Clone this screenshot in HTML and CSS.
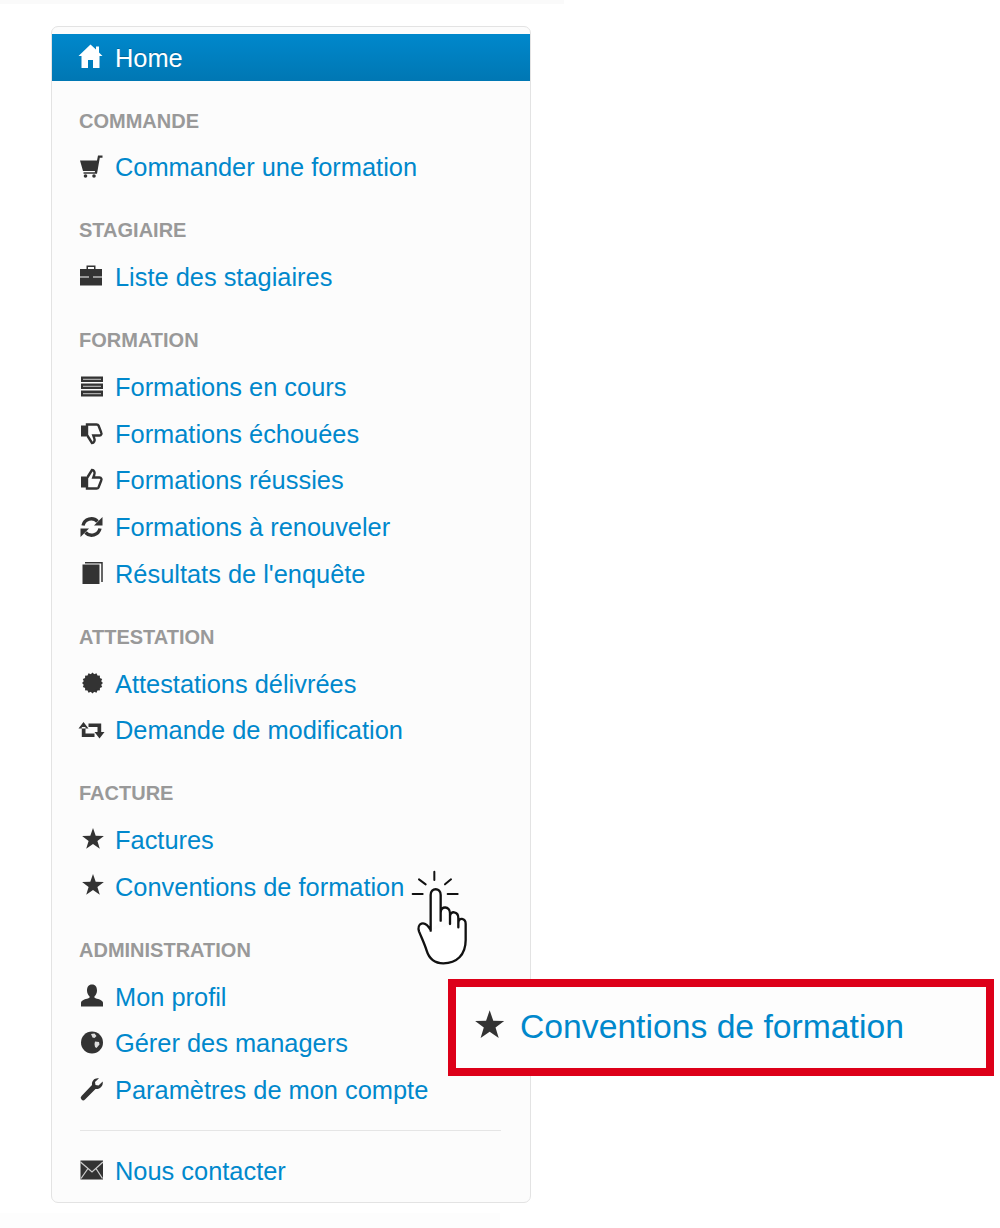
FILE: index.html
```html
<!DOCTYPE html>
<html lang="fr">
<head>
    <meta charset="UTF-8">
    <meta name="viewport" content="width=device-width, initial-scale=1.0">
    <title>Conventions de formation</title>
    <link rel="stylesheet" href="styles.css">
</head>
<body>
    <div class="top-strip"></div>

    <!-- icon sprite -->
    <svg class="sprite">
        <symbol id="i-star" viewBox="0 0 24 24">
            <polygon points="14,1 16.7,8.8 24.9,8.95 18.4,13.9 20.8,21.8 14,17.1 7.2,21.8 9.6,13.9 3.1,8.95 11.3,8.8"/>
        </symbol>
    </svg>

    <nav class="card">
        <a class="home" href="#">
            <svg class="icon" viewBox="0 0 24 24"><path d="M11.5 0.5 L17 5.5 V2.5 H20 V8.5 L23.5 12 H20.5 V24 H14 V16 H9 V24 H2.5 V12 H-0.5 Z"/></svg>
            Home
        </a>

        <section class="group">
            <h2>COMMANDE</h2>
            <a class="row" href="#">
                <svg class="icon" viewBox="0 0 24 24"><path d="M1 6.5 H18 L19 1.5 H23.5 V3.8 H20.8 L18 19.8 H4.5 V18.3 H15.8 L16 17 H4 Z"/><circle cx="6.5" cy="22" r="1.8"/><circle cx="15" cy="22" r="1.8"/></svg>
                Commander une formation
            </a>
        </section>

        <section class="group">
            <h2>STAGIAIRE</h2>
            <a class="row" href="#">
                <svg class="icon" viewBox="0 0 24 24"><path d="M7.5 5 V1.5 H16.5 V5 H15 V3 H9 V5 Z"/><path d="M1 5 H23 V12.5 H1 Z M1 13.5 H23 V21.5 H1 Z"/><rect x="10" y="12" width="4" height="2.5"/></svg>
                Liste des stagiaires
            </a>
        </section>

        <section class="group">
            <h2>FORMATION</h2>
            <a class="row" href="#">
                <svg class="icon" viewBox="0 0 24 24"><path d="M2 3.5 H24 V9 H2 Z M2 10.5 H24 V16 H2 Z M2 17.5 H24 V23.5 H2 Z"/><path class="dim" d="M4 5.7 H22 V6.9 H4 Z M4 12.7 H22 V13.9 H4 Z M4 20 H22 V21.2 H4 Z"/></svg>
                Formations en cours
            </a>
            <a class="row" href="#">
                <svg class="icon" viewBox="0 0 24 24"><g transform="matrix(1 0 0 -1 0 26)"><path d="M2 9.5 H7 V20.5 H2 Z"/><path class="line" d="M8 11 L13 3 C15 3 16.3 5.5 15.2 8 L14.3 10.5 H20.5 C22.5 10.5 22.8 12.5 22.2 13.5 L19.5 20.5 C19.2 21.2 18.5 21.5 17.5 21.5 H8 Z"/></g></svg>
                Formations échouées
            </a>
            <a class="row" href="#">
                <svg class="icon" viewBox="0 0 24 24"><path d="M2 9.5 H7 V20.5 H2 Z"/><path class="line" d="M8 11 L13 3 C15 3 16.3 5.5 15.2 8 L14.3 10.5 H20.5 C22.5 10.5 22.8 12.5 22.2 13.5 L19.5 20.5 C19.2 21.2 18.5 21.5 17.5 21.5 H8 Z"/></svg>
                Formations réussies
            </a>
            <a class="row" href="#">
                <svg class="icon" viewBox="0 0 24 24"><path class="line thick" d="M4 11.5 A8.5 8.5 0 0 1 18.5 7.5"/><path d="M23.5 3 V11.5 H15 Z"/><path class="line thick" d="M21 14.5 A8.5 8.5 0 0 1 6.5 18.5"/><path d="M1.5 23 V14.5 H10 Z"/></svg>
                Formations à renouveler
            </a>
            <a class="row" href="#">
                <svg class="icon" viewBox="0 0 24 24"><path d="M3.5 4.5 H20.5 V24 H3.5 Z"/><path class="line slim" d="M6 2.8 H23 V22"/></svg>
                Résultats de l'enquête
            </a>
        </section>

        <section class="group">
            <h2>ATTESTATION</h2>
            <a class="row" href="#">
                <svg class="icon" viewBox="0 0 24 24">
                    <circle cx="13.5" cy="13" r="7.7"/>
                    <rect x="6.1" y="5.6" width="14.8" height="14.8"/>
                    <rect x="6.1" y="5.6" width="14.8" height="14.8" transform="rotate(22.5 13.5 13)"/>
                    <rect x="6.1" y="5.6" width="14.8" height="14.8" transform="rotate(45 13.5 13)"/>
                    <rect x="6.1" y="5.6" width="14.8" height="14.8" transform="rotate(67.5 13.5 13)"/>
                </svg>
                Attestations délivrées
            </a>
            <a class="row" href="#">
                <svg class="icon" viewBox="0 0 24 24"><path d="M-0.5 11.5 H9.5 L4.5 5 Z M2.8 10 H6.5 V16.5 H15.5 V20 H2.8 Z"/><path d="M15.5 15 H25.5 L20.5 21.5 Z M22.2 16.5 H18.5 V10 H9.5 V6.5 H22.2 Z"/></svg>
                Demande de modification
            </a>
        </section>

        <section class="group">
            <h2>FACTURE</h2>
            <a class="row" href="#">
                <svg class="icon"><use href="#i-star"/></svg>
                Factures
            </a>
            <a class="row" href="#">
                <svg class="icon"><use href="#i-star"/></svg>
                Conventions de formation
            </a>
        </section>

        <section class="group">
            <h2>ADMINISTRATION</h2>
            <a class="row" href="#">
                <svg class="icon" viewBox="0 0 24 24"><path d="M13 1.5 C16.5 1.5 18 4.1 18 7.5 C18 10 17 12 15.5 13.2 V14.7 C18 16 24 16.7 24 19.7 V23.5 H2 V19.7 C2 16.7 8 16 10.5 14.7 V13.2 C9 12 8 10 8 7.5 C8 4.1 9.5 1.5 13 1.5 Z"/></svg>
                Mon profil
            </a>
            <a class="row" href="#">
                <svg class="icon" viewBox="0 0 24 24"><circle cx="13" cy="12.5" r="11"/><path class="cut" d="M12 4 L15.5 3.5 L17.5 6 L15.5 8 L13.5 7.5 Z M16 11.5 L20 12 L20.5 14.5 L17.5 18 L16 17 L15.5 14 Z"/></svg>
                Gérer des managers
            </a>
            <a class="row" href="#">
                <svg class="icon" viewBox="0 0 24 24"><path d="M23.7 4.5 L19.5 8.5 L16.5 8 L16 5 L20 1.3 C15.8 0.5 12.5 3.5 13 8 L2.5 19 A2.4 2.4 0 0 0 6 22.5 L16.5 12 C21 12.5 24.5 9 23.7 4.5 Z"/></svg>
                Paramètres de mon compte
            </a>
        </section>

        <hr class="divider">

        <a class="row" href="#">
            <svg class="icon" viewBox="0 0 24 24"><path d="M1.5 3.5 H24 V22.5 H1.5 Z"/><path class="cut-line" d="M1.5 5 L13 15 L24 5 M2 21.5 L9 11.5 M23.5 21.5 L17 11.5"/></svg>
            Nous contacter
        </a>
    </nav>

    <!-- pointer over the link -->
    <svg class="pointer" viewBox="0 0 270 345">
        <path class="rays" d="M103 35 V60 M57 58 L77 73 M153 58 L135 73 M38 102 H68 M143 102 H173"/>
        <path class="hand" d="M92 212 V105 C92 82 122 82 122 105 V182 M122 158 C122 136 150 138 150 160 V192 M150 170 C150 150 175 154 175 174 V202 M175 190 C175 170 197 174 197 192 V240 C197 285 170 310 130 310 C100 310 87 295 80 272 C74 252 66 236 57 214 C50 192 72 176 92 210"/>
    </svg>

    <!-- zoomed callout -->
    <div class="callout">
        <svg class="callout-star"><use href="#i-star"/></svg>
        <span class="callout-text">Conventions de formation</span>
    </div>

    <div class="bottom-strip"></div>
</body>
</html>
```

FILE: styles.css
```css
html, body {
    margin: 0;
    padding: 0;
    background-color: #fff;
}
body {
    position: relative;
    height: 1228px;
    overflow: hidden;
    font-family: "Liberation Sans", Arial, sans-serif;
}
a {
    text-decoration: none;
}
symbol {
    overflow: visible;
}
.sprite {
    position: absolute;
    width: 0;
    height: 0;
}
.top-strip {
    position: absolute;
    top: 0;
    left: 0;
    width: 564px;
    height: 4px;
    background-color: #fafafa;
}
.bottom-strip {
    position: absolute;
    left: 0;
    bottom: 0;
    width: 500px;
    height: 15px;
    background-color: #fdfdfd;
}
.card {
    position: relative;
    z-index: 1;
    box-sizing: border-box;
    width: 480px;
    margin: 26px 0 0 51px;
    padding: 7px 0 8px;
    background-color: #fcfcfc;
    border: 1px solid #e3e3e3;
    border-radius: 7px;
}
.home, .row {
    box-sizing: border-box;
    display: flex;
    align-items: center;
    gap: 12px;
    height: 46.7px;
    padding: 1px 0 0 27px;
    font-size: 25.4px;
    color: #0088cc;
    white-space: nowrap;
}
.home {
    padding-top: 2px;
    color: #fff;
    background: linear-gradient(to bottom, #0088cc, #0077b3);
    text-shadow: 0 -1px 0 rgba(0, 0, 0, 0.2);
}
.home .icon {
    margin-bottom: 5px;
    fill: #fff;
}
.group {
    margin-top: 16.5px;
}
.group h2 {
    box-sizing: border-box;
    display: flex;
    align-items: center;
    height: 46.7px;
    margin: 0;
    padding: 1px 0 0 27px;
    font-size: 20px;
    font-weight: bold;
    color: #999;
}
.icon {
    flex: none;
    width: 24px;
    height: 24px;
    margin-bottom: 4px;
    overflow: visible;
    fill: #333;
}
.line {
    fill: none;
    stroke: #333;
    stroke-width: 2.4;
}
.line.thick {
    stroke-width: 3.4;
}
.line.slim {
    stroke-width: 1.5;
}
.cut {
    fill: #ddd;
}
.dim {
    fill: #aaa;
}
.cut-line {
    fill: none;
    stroke: #ccc;
    stroke-width: 1.3;
}
.divider {
    height: 1px;
    margin: 16.5px 29px 16.5px 28px;
    border: 0;
    background-color: #e5e5e5;
}
.pointer {
    position: absolute;
    z-index: 2;
    left: 400px;
    top: 860px;
    width: 90px;
    height: 115px;
    fill: none;
    stroke: #111;
    stroke-linecap: round;
    stroke-linejoin: round;
}
.rays {
    stroke-width: 6;
}
.hand {
    stroke-width: 7;
    fill: #fff;
}
.callout {
    position: absolute;
    z-index: 2;
    left: 448px;
    top: 979px;
    box-sizing: border-box;
    display: flex;
    align-items: center;
    gap: 17px;
    width: 546px;
    height: 97px;
    padding-left: 15px;
    background-color: #fdfdfd;
    border: 8px solid #dd0019;
}
.callout-star {
    flex: none;
    width: 32px;
    height: 32px;
    margin-bottom: 6px;
    overflow: visible;
    fill: #333;
}
.callout-text {
    margin-bottom: 2px;
    font-size: 33.7px;
    color: #0088cc;
}
```
